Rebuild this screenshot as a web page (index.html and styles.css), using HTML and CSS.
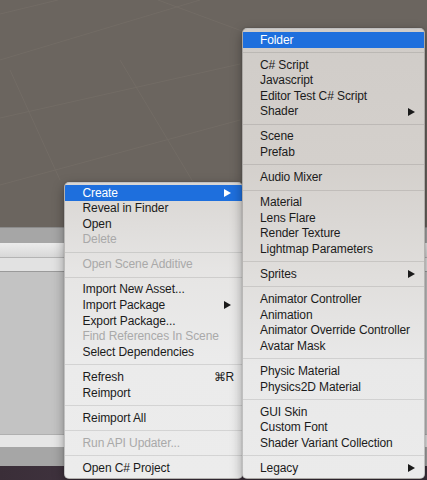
FILE: index.html
```html
<!DOCTYPE html>
<html>
<head>
<meta charset="utf-8">
<link rel="stylesheet" href="styles.css">
</head>
<body>
<div class="screen">
  <div class="scene">
    <svg class="grid" width="427" height="227" viewBox="0 0 427 227">
      <g stroke="#777069" stroke-width="1" fill="none">
        <line x1="0" y1="14" x2="58" y2="0"/>
        <line x1="0" y1="60" x2="200" y2="0"/>
        <line x1="0" y1="118" x2="240" y2="64"/>
        <line x1="0" y1="185" x2="240" y2="120"/>
        <line x1="158" y1="0" x2="250" y2="34"/>
        <line x1="10" y1="70" x2="60" y2="180"/>
        <line x1="120" y1="60" x2="220" y2="227"/>
      </g>
    </svg>
  </div>
  <div class="bar-dark"></div>
  <div class="tabbar"></div>
  <div class="searchbar"></div>
  <div class="panel"></div>
  <div class="footer"></div>
  <div class="bar-bottom"></div>
  <div class="dark-strip"></div>

  <div class="menu menu-left">
    <div class="item active"><span>Create</span><svg class="arrow" width="7" height="8" viewBox="0 0 7 8"><polygon points="0,0 7,4 0,8" fill="#fff"/></svg></div>
    <div class="item"><span>Reveal in Finder</span></div>
    <div class="item"><span>Open</span></div>
    <div class="item disabled"><span>Delete</span></div>
    <div class="sep"></div>
    <div class="item disabled"><span>Open Scene Additive</span></div>
    <div class="sep"></div>
    <div class="item"><span>Import New Asset...</span></div>
    <div class="item"><span>Import Package</span><svg class="arrow" width="7" height="8" viewBox="0 0 7 8"><polygon points="0,0 7,4 0,8" fill="#1a1a1a"/></svg></div>
    <div class="item"><span>Export Package...</span></div>
    <div class="item disabled"><span>Find References In Scene</span></div>
    <div class="item"><span>Select Dependencies</span></div>
    <div class="sep"></div>
    <div class="item"><span>Refresh</span><span class="shortcut">⌘R</span></div>
    <div class="item"><span>Reimport</span></div>
    <div class="sep"></div>
    <div class="item"><span>Reimport All</span></div>
    <div class="sep"></div>
    <div class="item disabled"><span>Run API Updater...</span></div>
    <div class="sep"></div>
    <div class="item"><span>Open C# Project</span></div>
  </div>

  <div class="menu menu-right">
    <div class="item active"><span>Folder</span></div>
    <div class="sep"></div>
    <div class="item"><span>C# Script</span></div>
    <div class="item"><span>Javascript</span></div>
    <div class="item"><span>Editor Test C# Script</span></div>
    <div class="item"><span>Shader</span><svg class="arrow" width="7" height="8" viewBox="0 0 7 8"><polygon points="0,0 7,4 0,8" fill="#1a1a1a"/></svg></div>
    <div class="sep"></div>
    <div class="item"><span>Scene</span></div>
    <div class="item"><span>Prefab</span></div>
    <div class="sep"></div>
    <div class="item"><span>Audio Mixer</span></div>
    <div class="sep"></div>
    <div class="item"><span>Material</span></div>
    <div class="item"><span>Lens Flare</span></div>
    <div class="item"><span>Render Texture</span></div>
    <div class="item"><span>Lightmap Parameters</span></div>
    <div class="sep"></div>
    <div class="item"><span>Sprites</span><svg class="arrow" width="7" height="8" viewBox="0 0 7 8"><polygon points="0,0 7,4 0,8" fill="#1a1a1a"/></svg></div>
    <div class="sep"></div>
    <div class="item"><span>Animator Controller</span></div>
    <div class="item"><span>Animation</span></div>
    <div class="item"><span>Animator Override Controller</span></div>
    <div class="item"><span>Avatar Mask</span></div>
    <div class="sep"></div>
    <div class="item"><span>Physic Material</span></div>
    <div class="item"><span>Physics2D Material</span></div>
    <div class="sep"></div>
    <div class="item"><span>GUI Skin</span></div>
    <div class="item"><span>Custom Font</span></div>
    <div class="item"><span>Shader Variant Collection</span></div>
    <div class="sep"></div>
    <div class="item"><span>Legacy</span><svg class="arrow" width="7" height="8" viewBox="0 0 7 8"><polygon points="0,0 7,4 0,8" fill="#1a1a1a"/></svg></div>
  </div>
</div>
</body>
</html>
```
FILE: styles.css
```css
html, body {
  margin: 0;
  padding: 0;
}
body {
  width: 427px;
  height: 480px;
  overflow: hidden;
  background: #6b655f;
  font-family: "Liberation Sans", Arial, sans-serif;
}
.screen {
  position: relative;
  width: 427px;
  height: 480px;
  display: flex;
  flex-direction: column;
}
.scene {
  height: 227px;
  background: #6b655f;
  flex: none;
}
.grid {
  display: block;
  opacity: 0.6;
}
.bar-dark {
  height: 15px;
  flex: none;
  background: #a6a6a6;
  border-top: 1px solid #8c8c8c;
}
.tabbar {
  height: 14px;
  flex: none;
  background: linear-gradient(#ececec, #d8d8d8);
  border-bottom: 1px solid #b4b4b4;
}
.searchbar {
  height: 13px;
  flex: none;
  background: #e2e2e2;
  border-bottom: 1px solid #9a9a9a;
}
.panel {
  height: 162px;
  flex: none;
  background: #c3c3c3;
}
.footer {
  height: 12px;
  flex: none;
  background: #e6e6e6;
  border-top: 1px solid #b0b0b0;
}
.bar-bottom {
  height: 19px;
  flex: none;
  background: #a6a6a6;
}
.dark-strip {
  flex: 1;
  background: linear-gradient(90deg, #3a2e38, #463845 40%, #3b303a);
}

.menu {
  position: absolute;
  box-sizing: border-box;
  border-radius: 5px;
  border: 1px solid rgba(0, 0, 0, 0.18);
  box-shadow: 0 4px 12px rgba(0, 0, 0, 0.35), 0 0 2px rgba(0, 0, 0, 0.2);
  font-size: 12px;
  letter-spacing: -0.1px;
  color: #1b1b1b;
  overflow: hidden;
}
.menu-left {
  left: 64px;
  top: 182px;
  width: 179px;
  height: 297px;
  padding-top: 2px;
  background: linear-gradient(#d9d6d3 0%, #e6e5e4 30%, #ebebeb 60%, #ececec 100%);
}
.menu-right {
  left: 242px;
  top: 28px;
  width: 183px;
  height: 451px;
  padding-top: 3px;
  background: linear-gradient(#d0ccc8 0%, #d4d0cc 30%, #e0dedc 55%, #e9e9e9 75%, #ebebeb 100%);
}
.item {
  height: 15.6px;
  line-height: 15.6px;
  display: flex;
  align-items: center;
  justify-content: space-between;
  white-space: nowrap;
}
.item span {
  position: relative;
  top: 0.5px;
}
.menu-left .item {
  padding: 0 9px 0 17.5px;
}
.menu-right .item {
  padding: 0 9px 0 17px;
}
.item.active {
  background: #1e6fdd;
  color: #fff;
}
.item.disabled {
  color: #a9a9a9;
}
.arrow {
  display: block;
  flex: none;
}
.menu-left .arrow {
  margin-right: 2px;
}
.shortcut {
  margin-right: -1px;
}
.sep {
  height: 1px;
  margin: 4.25px 0;
  background: rgba(0, 0, 0, 0.1);
}
```
